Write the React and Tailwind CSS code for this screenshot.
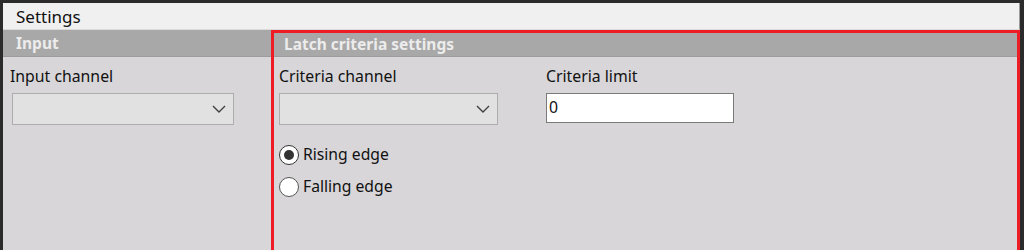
import React from "react";

function Chevron() {
  return (
    <svg width="14" height="8" viewBox="0 0 14 8" fill="none">
      <path d="M1 1l6 6 6-6" stroke="#404040" strokeWidth="1.4" />
    </svg>
  );
}

function Combo({ width }) {
  return (
    <div
      className="h-[32px] bg-[#e1e1e1] border border-[#adadad] flex items-center justify-end pr-[7px]"
      style={{ width }}
    >
      <Chevron />
    </div>
  );
}

function Radio({ checked, label }) {
  return (
    <div className="flex items-center h-[20px] gap-[4px]">
      <div
        className={
          "w-[20px] h-[20px] rounded-full bg-white flex items-center justify-center border-[1.5px] " +
          (checked ? "border-[#333333]" : "border-[#555555]")
        }
      >
        {checked && <div className="w-[10px] h-[10px] rounded-full bg-[#333333]" />}
      </div>
      <span className="text-[15.7px] leading-none text-[#111]">{label}</span>
    </div>
  );
}

export default function App() {
  return (
    <div
      className="w-[1024px] h-[250px] bg-[#2b2b2b] pt-[3px] pl-[3px] pr-[4px] flex flex-col overflow-hidden"
      style={{ fontFamily: '"Noto Sans", "Open Sans", sans-serif' }}
    >
      <div className="h-[27px] bg-[#f0f0f0] border-b border-[#dadada] border-r border-r-[#9a9a9a] flex items-center pl-[13px]">
        <span className="text-[17px] text-[#111] leading-none">Settings</span>
      </div>
      <div className="flex-1 flex bg-[#d8d6d8]">
        <div className="w-[268px] flex flex-col">
          <div className="h-[27px] bg-[#a8a8a8] border-b border-[#9c9c9c] flex items-center pl-[13px] pt-[1px]">
            <span className="text-[15.5px] font-bold text-[#ececec] leading-none">Input</span>
          </div>
          <div className="flex flex-col pt-[9px]">
            <span className="pl-[7px] text-[15.8px] text-[#111] leading-[20px]">Input channel</span>
            <div className="ml-[9px] mt-[7px]">
              <Combo width="222px" />
            </div>
          </div>
        </div>
        <div className="flex-1 flex flex-col border-[3px] border-b-0 border-[#ee1c24]">
          <div className="h-[24px] bg-[#a8a8a8] border-b border-[#9c9c9c] flex items-center pl-[10px] pt-[1px]">
            <span className="text-[15.5px] font-bold text-[#ececec] leading-none">Latch criteria settings</span>
          </div>
          <div className="flex flex-col pl-[5px] pt-[9px]">
            <div className="flex gap-[48px]">
              <div className="flex flex-col">
                <span className="text-[15.8px] text-[#111] leading-[20px]">Criteria channel</span>
                <div className="mt-[7px]">
                  <Combo width="219px" />
                </div>
              </div>
              <div className="flex flex-col">
                <span className="text-[15.8px] text-[#111] leading-[20px]">Criteria limit</span>
                <div className="mt-[7px] w-[188px] h-[30px] bg-white border border-[#7a7a7a] flex items-center pl-[2px]">
                  <span className="text-[15.8px] text-[#111] leading-none">0</span>
                </div>
              </div>
            </div>
            <div className="flex flex-col gap-[12px] mt-[20px]">
              <Radio checked label="Rising edge" />
              <Radio label="Falling edge" />
            </div>
          </div>
        </div>
      </div>
    </div>
  );
}
